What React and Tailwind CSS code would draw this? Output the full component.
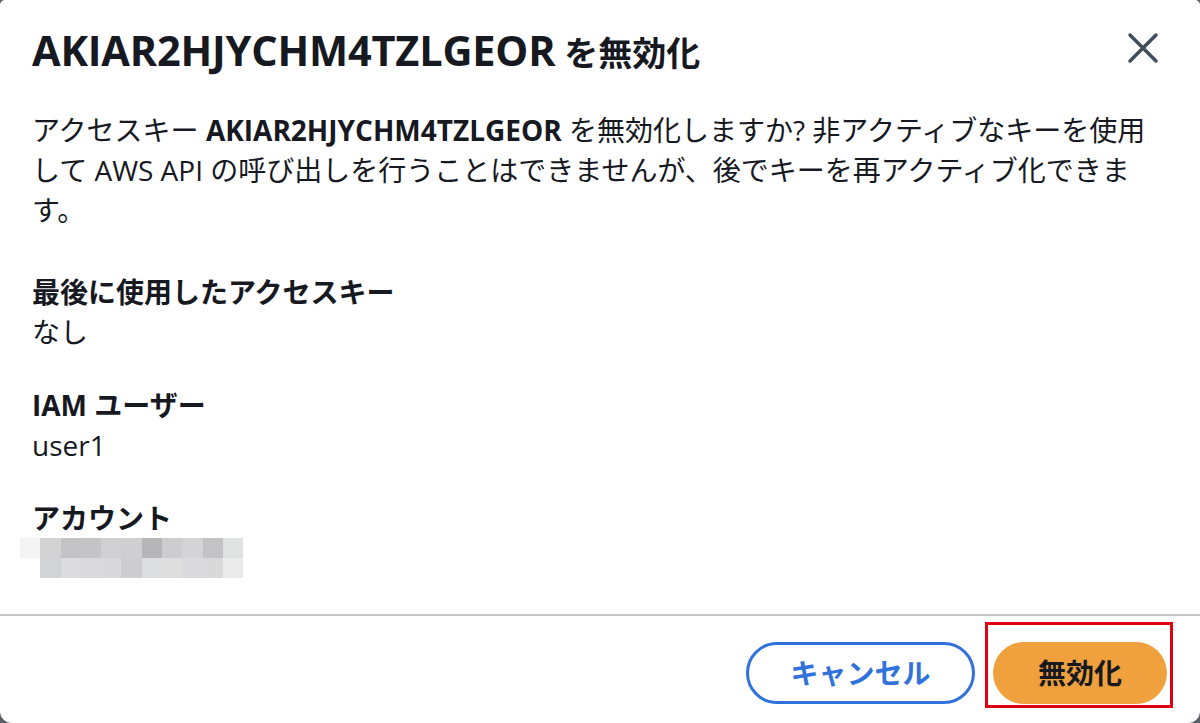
import React from "react";

const font = { fontFamily: '"Open Sans", "Noto Sans CJK JP", sans-serif' };

// pixelated (masked) account id, two rows of grey cells
const maskRows = [
  ["#f4f4f4", "#d3d3d4", "#c3c3c5", "#c4c4c6", "#d0d0d2", "#cfcfd1", "#b6b6b8", "#cdcdcf", "#d4d4d6", "#c3c3c5", "#e0e1e1"],
  ["#ffffff", "#d3d4d6", "#dcdcde", "#dadadc", "#d9d9db", "#cdcdcf", "#dddedf", "#dedede", "#dadadc", "#d9d9da", "#ebebeb"],
];

const Field = ({ label, children }) => (
  <div>
    <p className="text-[28px] leading-[40px] font-bold text-[#16191f]">{label}</p>
    <div className="text-[28px] leading-[40px] text-[#16191f]">{children}</div>
  </div>
);

const App = () => {
  return (
    <div className="w-[1200px] h-[723px] bg-[#5b6068] overflow-hidden" style={font}>
      <div className="w-full h-[723px] bg-white rounded-t-[5px] rounded-b-[12px] flex flex-col">
        {/* Header */}
        <div className="flex items-center justify-between pl-[32px] pr-[41px] h-[72px] pt-[28px]">
          <h2 className="h-[44px] text-[34px] leading-[44px] font-bold text-[#16191f] whitespace-nowrap">
            <span className="text-[41.5px] leading-[44px] tracking-[-0.2px]">AKIAR2HJYCHM4TZLGEOR</span> を無効化
          </h2>
          <button className="w-[32px] h-[32px] -mt-[4px]">
            <svg viewBox="0 0 32 32" width="32" height="32">
              <path d="M3 3 L29 29 M29 3 L3 29" stroke="#414d5c" strokeWidth="3.5" strokeLinecap="round" fill="none" />
            </svg>
          </button>
        </div>

        {/* Body */}
        <div className="px-[32px] pt-[38px] flex-1">
          <p className="text-[28px] leading-[40px] text-[#16191f] pr-[16px]">
            アクセスキー <span className="font-bold">AKIAR2HJYCHM4TZLGEOR</span> を無効化しますか? 非アクティブなキーを使用して AWS API の呼び出しを行うことはできませんが、後でキーを再アクティブ化できます。
          </p>

          <div className="mt-[42px] flex flex-col gap-[33px]">
            <Field label="最後に使用したアクセスキー">なし</Field>
            <Field label="IAM ユーザー">user1</Field>
            <div>
              <p className="text-[28px] leading-[40px] font-bold text-[#16191f]">アカウント</p>
              <div className="-ml-[12px] flex flex-col">
                {maskRows.map((row, i) => (
                  <div key={i} className="flex">
                    {row.map((c, j) => (
                      <div key={j} className="w-[20.3px] h-[20px]" style={{ backgroundColor: c }} />
                    ))}
                  </div>
                ))}
              </div>
            </div>
          </div>
        </div>

        {/* Footer */}
        <div className="border-t-2 border-[#c6c6cd] flex justify-end items-end gap-[10px] pr-[27px] pt-[6px] pb-[15px]">
          <button className="mb-[4px] w-[229px] h-[62px] rounded-full border-[3px] border-[#2f72dc] text-[#2f72dc] text-[28px] font-bold">
            キャンセル
          </button>
          <div className="border-[3px] border-[#e00012] pl-[5px] pr-[3px] pt-[17px] pb-[1px]">
            <button className="w-[174px] h-[62px] rounded-full bg-[#f0a03c] text-[#16191f] text-[28px] font-bold">
              無効化
            </button>
          </div>
        </div>
      </div>
    </div>
  );
};

export default App;
